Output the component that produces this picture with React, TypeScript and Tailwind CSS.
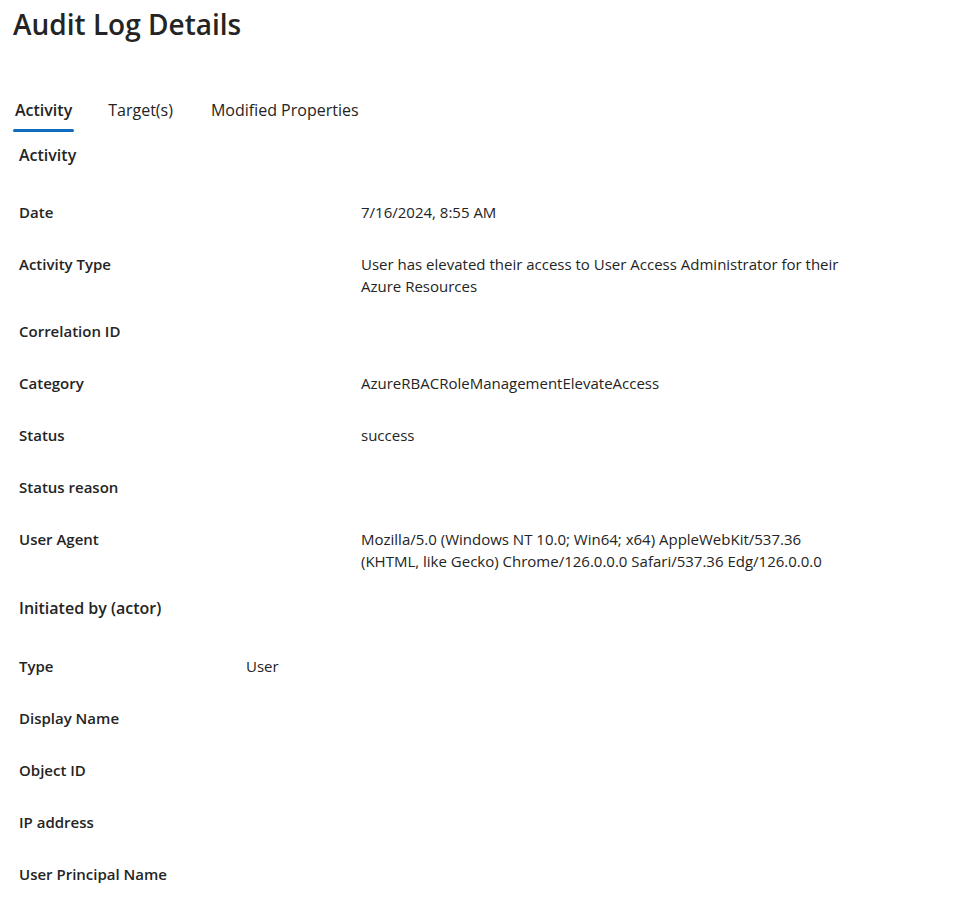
import React from "react";

const font = { fontFamily: '"Open Sans", "Noto Sans", sans-serif' };

type Row = { label: string; value?: string };

const activityRows: Row[] = [
  { label: "Date", value: "7/16/2024, 8:55 AM" },
  {
    label: "Activity Type",
    value: "User has elevated their access to User Access Administrator for their Azure Resources",
  },
  { label: "Correlation ID" },
  { label: "Category", value: "AzureRBACRoleManagementElevateAccess" },
  { label: "Status", value: "success" },
  { label: "Status reason" },
  {
    label: "User Agent",
    value:
      "Mozilla/5.0 (Windows NT 10.0; Win64; x64) AppleWebKit/537.36 (KHTML, like Gecko) Chrome/126.0.0.0 Safari/537.36 Edg/126.0.0.0",
  },
];

const actorRows: Row[] = [
  { label: "Type", value: "User" },
  { label: "Display Name" },
  { label: "Object ID" },
  { label: "IP address" },
  { label: "User Principal Name" },
];

function DetailRow({ row, wide }: { row: Row; wide: boolean }) {
  return (
    <div className="flex min-h-[52px] pt-[2px] pb-[21px] text-[15px] leading-[22px] text-[#242424]">
      <div className={`${wide ? "w-[342px]" : "w-[227px]"} shrink-0 font-semibold`}>{row.label}</div>
      <div className="w-[480px]">{row.value}</div>
    </div>
  );
}

export default function App() {
  return (
    <div className="w-[975px] h-[900px] bg-white overflow-hidden" style={font}>
      <h1 className="pl-[13px] pt-[4px] text-[28px] leading-[40px] font-semibold text-[#242424]">
        Audit Log Details
      </h1>
      <div className="mt-[55px] flex pl-[13px] text-[16px] leading-[22px] text-[#242424]">
        <div className="relative pb-[10px] pr-[36px]">
          <span className="font-semibold pl-[2px]">Activity</span>
          <div className="absolute left-0 bottom-[-1px] h-[3px] w-[61px] rounded-full bg-[#0f6cbd]" />
        </div>
        <div className="pr-[38px]">Target(s)</div>
        <div>Modified Properties</div>
      </div>
      <div className="pl-[19px]">
        <div className="pt-[13px] pb-[33px] text-[16px] leading-[22px] font-semibold text-[#242424]">
          Activity
        </div>
        {activityRows.map((r) => (
          <DetailRow key={r.label} row={r} wide />
        ))}
        <div className="pt-[4px] pb-[34px] text-[16px] leading-[22px] font-semibold text-[#242424]">
          Initiated by (actor)
        </div>
        {actorRows.map((r) => (
          <DetailRow key={r.label} row={r} wide={false} />
        ))}
      </div>
    </div>
  );
}
